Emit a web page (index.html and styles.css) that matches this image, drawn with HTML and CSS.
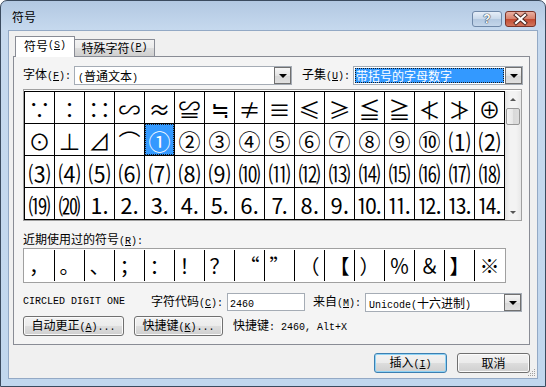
FILE: index.html
```html
<!DOCTYPE html>
<html lang="zh-CN">
<head>
<meta charset="UTF-8" />
<meta name="viewport" content="width=device-width, initial-scale=1" />
<title>符号</title>
<link rel="stylesheet" href="styles.css">
</head>
<body>

<div class="window">
  <div class="titlebar">
    <span class="title">符号</span>
    <div class="caption-btns">
      <span class="cap help">?</span>
      <span class="cap close">
        <svg width="29" height="14" viewBox="0 0 29 14">
          <path d="M10 3 L19 11 M19 3 L10 11" stroke="#4a2620" stroke-width="4" stroke-linecap="square" fill="none"/>
          <path d="M10 3 L19 11 M19 3 L10 11" stroke="#fff" stroke-width="2.2" stroke-linecap="square" fill="none"/>
        </svg>
      </span>
    </div>
  </div>

  <div class="client">
    <div class="tabs">
      <div class="tab on">符号<span class="m">(<u>S</u>)</span></div>
      <div class="tab">特殊字符<span class="m">(<u>P</u>)</span></div>
    </div>

    <div class="panel">
      <div class="font-row">
        <span class="lbl lbl-font">字体<span class="m">(<u>F</u>):</span></span>
        <div class="combo font-combo">
          <span class="val"><span class="m">(</span>普通文本<span class="m">)</span></span>
          <span class="drop"></span>
        </div>
        <span class="lbl lbl-subset">子集<span class="m">(<u>U</u>):</span></span>
        <div class="combo subset-combo">
          <span class="val sel">带括号的字母数字</span>
          <span class="drop"></span>
        </div>
      </div>

      <div class="charmap">
        <div class="cells">
          <span>∵</span><span>∶</span><span>∷</span><span>∽</span><span>≈</span><span>≌</span><span>≒</span><span>≠</span>
          <span>≡</span><span>≤</span><span>≥</span><span>≦</span><span>≧</span><span>≮</span><span>≯</span><span>⊕</span>
          <span>⊙</span><span>⊥</span><span>⊿</span><span>⌒</span><span class="picked">①</span><span>②</span><span>③</span><span>④</span>
          <span>⑤</span><span>⑥</span><span>⑦</span><span>⑧</span><span>⑨</span><span>⑩</span><span>⑴</span><span>⑵</span>
          <span>⑶</span><span>⑷</span><span>⑸</span><span>⑹</span><span>⑺</span><span>⑻</span><span>⑼</span><span>⑽</span>
          <span>⑾</span><span>⑿</span><span>⒀</span><span>⒁</span><span>⒂</span><span>⒃</span><span>⒄</span><span>⒅</span>
          <span>⒆</span><span>⒇</span><span>⒈</span><span>⒉</span><span>⒊</span><span>⒋</span><span>⒌</span><span>⒍</span>
          <span>⒎</span><span>⒏</span><span>⒐</span><span>⒑</span><span>⒒</span><span>⒓</span><span>⒔</span><span>⒕</span>
        </div>
        <div class="vscroll">
          <span class="sb-btn"><i class="arrow up"></i></span>
          <span class="thumb"></span>
          <span class="track"></span>
          <span class="sb-btn"><i class="arrow down"></i></span>
        </div>
      </div>

      <div class="recent-lbl">近期使用过的符号<span class="m">(<u>R</u>):</span></div>
      <div class="recent">
        <span>，</span><span>。</span><span>、</span><span>；</span><span>：</span><span>！</span><span>？</span><span>“</span>
        <span>”</span><span>（</span><span>【</span><span>）</span><span>％</span><span>＆</span><span>】</span><span>※</span>
      </div>

      <div class="code-row">
        <span class="m char-name">CIRCLED DIGIT ONE</span>
        <span class="lbl lbl-code">字符代码<span class="m">(<u>C</u>):</span></span>
        <span class="input"><span class="m">2460</span></span>
        <span class="lbl lbl-from">来自<span class="m">(<u>M</u>):</span></span>
        <div class="combo from-combo">
          <span class="val"><span class="m">Unicode(</span>十六进制<span class="m">)</span></span>
          <span class="drop"></span>
        </div>
      </div>

      <div class="btn-row">
        <button class="btn autocorrect">自动更正<span class="m">(<u>A</u>)...</span></button>
        <button class="btn shortcut">快捷键<span class="m">(<u>K</u>)...</span></button>
        <span class="shortcut-info">快捷键<span class="m">: 2460, Alt+X</span></span>
      </div>
    </div>

    <div class="dlg-btns">
      <button class="btn default">插入<span class="m">(<u>I</u>)</span></button>
      <button class="btn">取消</button>
    </div>

    <svg class="grip" width="10" height="10" viewBox="0 0 10 10">
      <g fill="#a0a0a0">
        <rect x="8" y="2" width="1" height="1"/><rect x="6" y="4" width="1" height="1"/><rect x="8" y="4" width="1" height="1"/>
        <rect x="4" y="6" width="1" height="1"/><rect x="6" y="6" width="1" height="1"/><rect x="8" y="6" width="1" height="1"/>
        <rect x="2" y="8" width="1" height="1"/><rect x="4" y="8" width="1" height="1"/><rect x="6" y="8" width="1" height="1"/><rect x="8" y="8" width="1" height="1"/>
      </g>
    </svg>
  </div>
</div>

</body>
</html>
```

FILE: styles.css
```css
* {
  box-sizing: border-box;
}
body {
  margin: 0;
  background: #fff;
  color: #000;
  font: 12px/14px "Noto Sans CJK SC", sans-serif;
}
.m {
  font-family: "Liberation Mono", monospace;
  font-size: 10px;
}
u {
  text-decoration: underline;
}

/* window frame */
.window {
  width: 546px;
  height: 387px;
  border: 1px solid #3b4b5f;
  border-radius: 7px 7px 0 0;
  background: linear-gradient(#b2c8e2, #c6d9ee 29px, #c1d7ee);
  padding: 0 7px 7px;
  display: flex;
  flex-direction: column;
}
.titlebar {
  height: 29px;
  display: flex;
  align-items: flex-start;
  padding: 0 2px 0 4px;
}
.title {
  margin-top: 9px;
  font-size: 12px;
  line-height: 14px;
}
.caption-btns {
  margin-left: auto;
  margin-top: 10px;
  display: flex;
  gap: 3px;
}
.cap {
  height: 16px;
  border-radius: 3px;
  display: flex;
  align-items: center;
  justify-content: center;
}
.help {
  width: 30px;
  border: 1px solid #6f88a8;
  background: linear-gradient(#e6eef8, #c8d8ea 50%, #b3c8e0 51%, #c4d6ea);
  color: #fff;
  font: bold 12px/14px "Liberation Sans", sans-serif;
  text-shadow: 0 0 1px #2d3d52, 0 0 1px #2d3d52, 0 0 1px #2d3d52;
}
.close {
  width: 31px;
  border: 1px solid #7a3328;
  background: linear-gradient(#eab0a2, #d6806b 50%, #c24a31 51%, #d2755c);
}

/* client area */
.client {
  flex: 1;
  position: relative;
  background: #f0f0f0;
  border: 1px solid #93a9c5;
  padding: 5px 0 0 4px;
}
.tabs {
  display: flex;
  align-items: flex-end;
  height: 21px;
  margin-left: 2px;
  margin-bottom: -1px;
  position: relative;
  z-index: 1;
}
.tab {
  height: 18px;
  width: 80px;
  border: 1px solid #898c95;
  border-left: none;
  background: linear-gradient(#f3f3f3, #ebebeb 50%, #dddddd 51%, #cfcfcf);
  display: flex;
  align-items: center;
  justify-content: center;
}
.tab.on {
  width: 60px;
  height: 21px;
  border-left: 1px solid #898c95;
  border-bottom: none;
  background: #fff;
  padding-bottom: 2px;
}
.panel {
  width: 517px;
  height: 289px;
  border: 1px solid #898c95;
  background: #f4f4f4;
  padding: 9px 0 0 9px;
}

/* font / subset row */
.font-row,
.code-row,
.btn-row {
  display: flex;
  align-items: center;
}
.font-row {
  height: 19px;
}
.lbl-font {
  width: 51px;
}
.lbl-subset {
  width: 51px;
  margin-left: 10px;
}
.combo {
  height: 19px;
  border: 1px solid #a5acb5;
  background: #fff;
  display: flex;
  align-items: center;
  padding: 0 0 0 1px;
}
.combo .val {
  flex: 1;
  height: 15px;
  line-height: 15px;
  padding-left: 2px;
  white-space: nowrap;
}
.combo .val.sel {
  margin-right: 1px;
  padding-left: 1px;
  background: #3399ff;
  color: #fff;
  outline: 1px dotted #1a1a1a;
  outline-offset: -1px;
}
.font-combo {
  width: 218px;
}
.subset-combo {
  width: 170px;
}
.drop {
  width: 17px;
  height: 17px;
  border: 1px solid #707070;
  background: linear-gradient(#f6f6f6, #e4e4e4 50%, #d6d6d6 51%, #e0e0e0);
  position: relative;
}
.drop::after {
  content: "";
  position: absolute;
  left: 4px;
  top: 6px;
  border-left: 4px solid transparent;
  border-right: 4px solid transparent;
  border-top: 4px solid #000;
}

/* character grid */
.charmap {
  margin-top: 4px;
  width: 499px;
  border: 1px solid #a0a0a0;
  background: #fff;
  padding-top: 1px;
  display: flex;
}
.cells {
  display: grid;
  grid-template-columns: repeat(16, 29px);
  grid-auto-rows: 31px;
  gap: 1px;
  background: #000;
  border: 1px solid #000;
}
.cells span {
  background: #fff;
  display: flex;
  align-items: center;
  justify-content: center;
  font-size: 22px;
  line-height: 1;
}
.cells span.picked {
  background: #3399ff;
  color: #fff;
  outline: 1px dotted #1a1a1a;
  outline-offset: -1px;
}
.vscroll {
  width: 16px;
  height: 129px;
  display: flex;
  flex-direction: column;
  background: linear-gradient(90deg, #e4e4e4, #f3f3f3 30%, #f3f3f3 70%, #e8e8e8);
}
.sb-btn {
  height: 16px;
  display: flex;
  align-items: center;
  justify-content: center;
}
.track {
  flex: 1;
}
.thumb {
  height: 17px;
  margin: 1px 1px 0;
  border: 1px solid #979797;
  border-radius: 2px;
  background: linear-gradient(90deg, #f4f4f4, #e7e7e7 50%, #d9d9d9 51%, #dedede);
}
.arrow {
  width: 0;
  height: 0;
  border-left: 3px solid transparent;
  border-right: 3px solid transparent;
}
.arrow.up {
  border-bottom: 3px solid #555;
}
.arrow.down {
  border-top: 3px solid #555;
}

/* recently used */
.recent-lbl {
  margin-top: 11px;
  height: 14px;
  margin-bottom: 2px;
}
.recent {
  width: 483px;
  height: 35px;
  border: 1px solid #a0a0a0;
  background: #fff;
  padding: 1px 0;
  display: flex;
}
.recent span {
  width: 30px;
  height: 31px;
  border-left: 1px solid #000;
  display: flex;
  align-items: center;
  justify-content: center;
  font-size: 20px;
  line-height: 1;
}
.recent span:first-child {
  border-left: none;
}

/* code row */
.code-row {
  margin-top: 10px;
  height: 18px;
}
.char-name {
  width: 128px;
}
.lbl-code {
  width: 76px;
}
.input {
  width: 78px;
  height: 18px;
  border: 1px solid #a5acb5;
  background: #fff;
  padding-left: 2px;
  line-height: 16px;
}
.lbl-from {
  width: 52px;
  margin-left: 8px;
}
.from-combo {
  width: 157px;
}

/* buttons */
.btn-row {
  margin-top: 5px;
  height: 20px;
}
.btn {
  height: 20px;
  padding: 0;
  border: 1px solid #707070;
  border-radius: 3px;
  background: linear-gradient(#f2f2f2, #ebebeb 50%, #dddddd 51%, #cfcfcf);
  box-shadow: inset 0 0 0 1px #fbfbfb;
  font: 12px/14px "Noto Sans CJK SC", sans-serif;
  color: #000;
}
.autocorrect {
  width: 101px;
  margin-right: 10px;
}
.shortcut {
  width: 89px;
  margin-right: 10px;
}
.dlg-btns {
  width: 517px;
  margin-top: 8px;
  display: flex;
  justify-content: flex-end;
  gap: 10px;
}
.dlg-btns .btn {
  width: 73px;
}
.btn.default {
  border-color: #3c7fb1;
  box-shadow: inset 0 0 0 1px #8fd3f5;
}
.grip {
  position: absolute;
  right: 1px;
  bottom: 1px;
}
```
